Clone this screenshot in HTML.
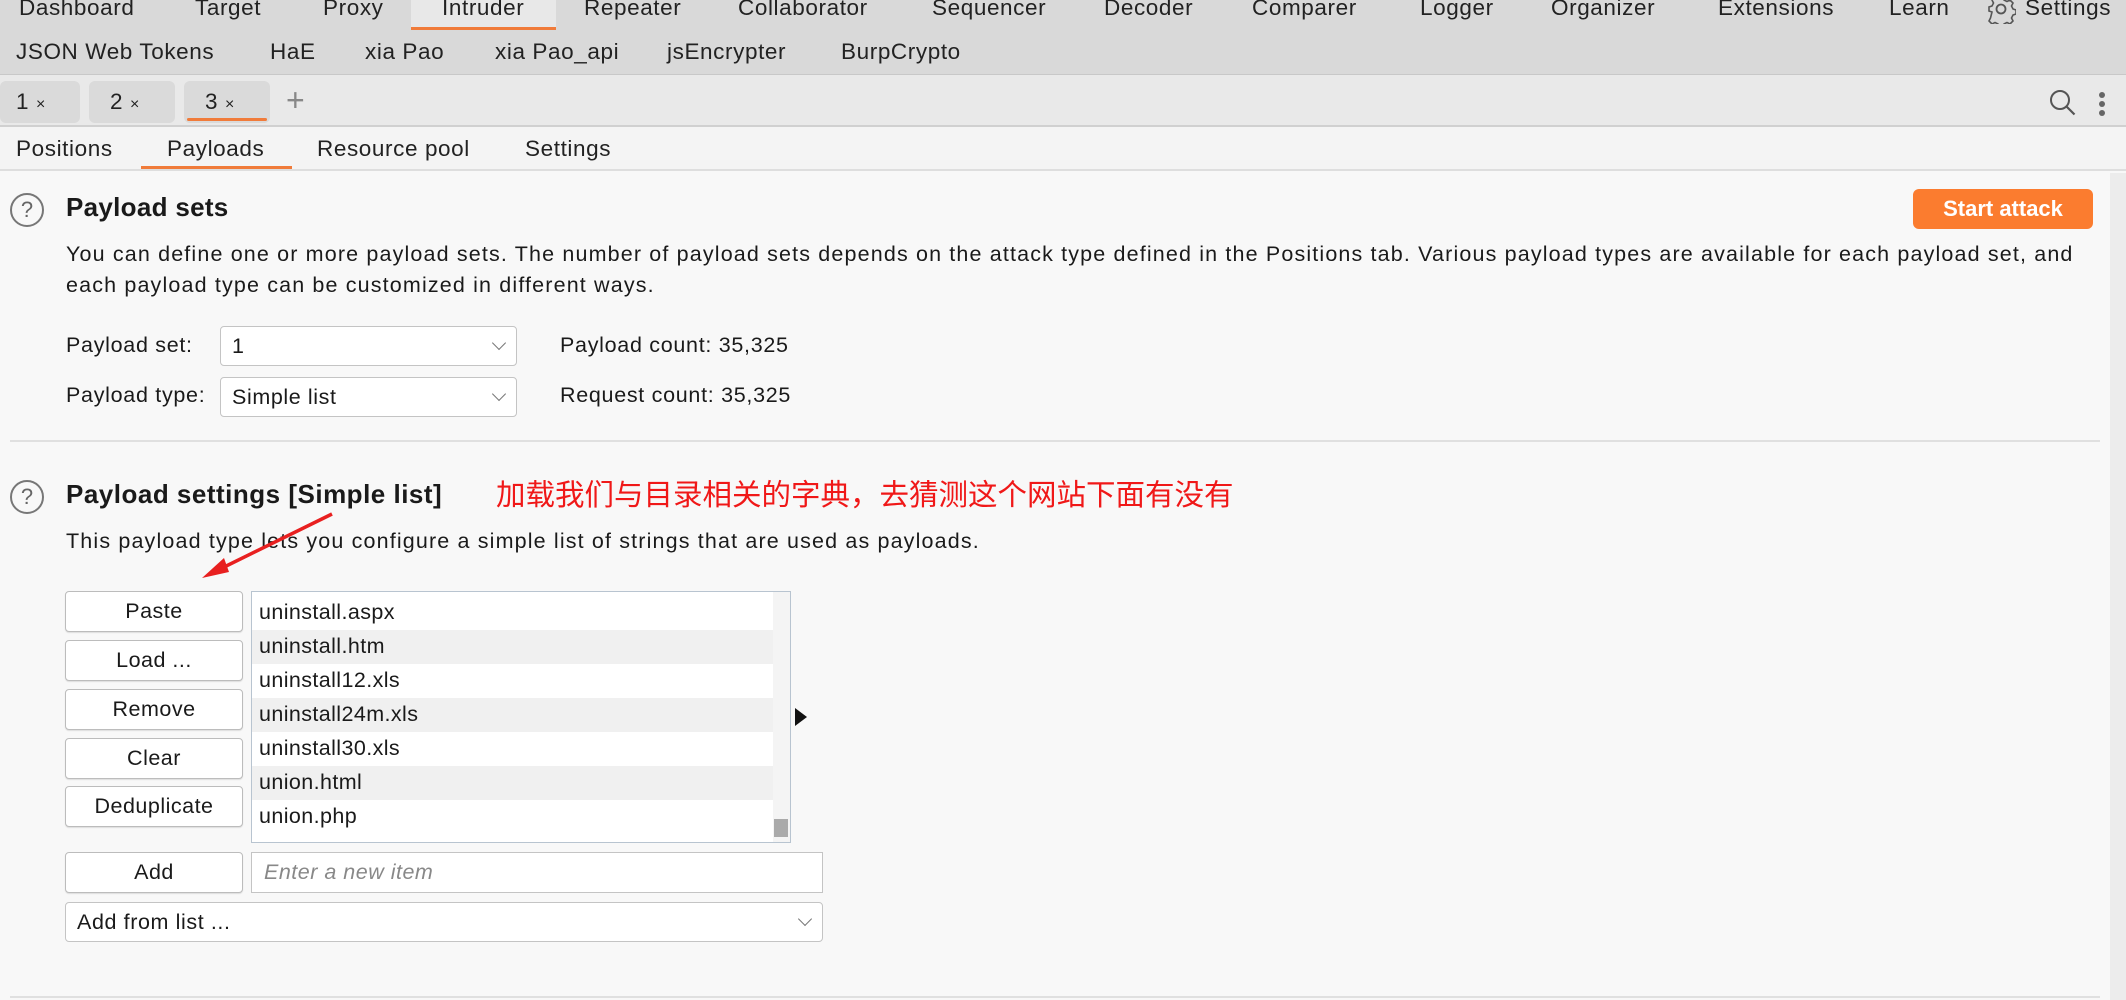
<!DOCTYPE html>
<html><head><meta charset="utf-8"><style>
*{margin:0;padding:0;box-sizing:border-box}
body{width:2126px;height:1000px;overflow:hidden;background:#f8f8f8;font-family:"Liberation Sans","Noto Sans CJK SC",sans-serif;color:#1a1a1a;position:relative}
.a{position:absolute;white-space:nowrap}
.nav{font-size:22.5px;color:#222;letter-spacing:0.6px}
.t{font-size:21.5px;letter-spacing:0.7px}
.d{font-size:21.5px;letter-spacing:1.15px}
.btn{position:absolute;left:65px;width:178px;height:41px;border:1px solid #bcbcbc;border-radius:4px;background:#fff;font-size:21.5px;letter-spacing:0.5px;text-align:center;line-height:39px;box-shadow:0 1px 1px #ddd}
.sel{position:absolute;height:40px;background:#fff;border:1px solid #c4c4c4;border-radius:4px;font-size:21.5px;letter-spacing:0.6px;line-height:38px;padding-left:11px}
.chev{position:absolute;right:12px;top:11px;width:10px;height:10px;border-right:1.5px solid #777;border-bottom:1.5px solid #777;transform:rotate(45deg)}
.help{position:absolute;width:34px;height:34px;border:2.5px solid #777;border-radius:50%;font-size:22px;text-align:center;line-height:29px;color:#666}
.row{height:34px;font-size:21.5px;letter-spacing:0.4px;line-height:32px;padding-left:7px}
</style></head><body>
<div class="a" style="left:0;top:0;width:2126px;height:74px;background:#d9d9d9"></div>
<div class="a" style="left:411px;top:0;width:145px;height:30px;background:#e8e8e8;border-bottom:3px solid #f07b3a"></div>
<div class="a nav" style="left:19px;top:-5px">Dashboard</div>
<div class="a nav" style="left:195px;top:-5px">Target</div>
<div class="a nav" style="left:323px;top:-5px">Proxy</div>
<div class="a nav" style="left:442px;top:-5px">Intruder</div>
<div class="a nav" style="left:584px;top:-5px">Repeater</div>
<div class="a nav" style="left:738px;top:-5px">Collaborator</div>
<div class="a nav" style="left:932px;top:-5px">Sequencer</div>
<div class="a nav" style="left:1104px;top:-5px">Decoder</div>
<div class="a nav" style="left:1252px;top:-5px">Comparer</div>
<div class="a nav" style="left:1420px;top:-5px">Logger</div>
<div class="a nav" style="left:1551px;top:-5px">Organizer</div>
<div class="a nav" style="left:1718px;top:-5px">Extensions</div>
<div class="a nav" style="left:1889px;top:-5px">Learn</div>
<svg class="a" style="left:1986px;top:-6px" width="30" height="30" viewBox="0 0 30 30"><circle cx="15" cy="15" r="4.5" fill="none" stroke="#555" stroke-width="1.8"/><path d="M13 3h4l1 3 3 1.5 3-1.5 3 3-1.5 3 1.5 3 3 1v4l-3 1-1.5 3 1.5 3-3 3-3-1.5-3 1.5-1 3h-4l-1-3-3-1.5-3 1.5-3-3 1.5-3L6 18l-3-1v-4l3-1 1.5-3L6 6l3-3 3 1.5z" fill="none" stroke="#555" stroke-width="1.6"/></svg>
<div class="a nav" style="left:2025px;top:-5px">Settings</div>
<div class="a nav" style="left:16px;top:39px">JSON Web Tokens</div>
<div class="a nav" style="left:270px;top:39px">HaE</div>
<div class="a nav" style="left:365px;top:39px">xia Pao</div>
<div class="a nav" style="left:495px;top:39px">xia Pao_api</div>
<div class="a nav" style="left:667px;top:39px">jsEncrypter</div>
<div class="a nav" style="left:841px;top:39px">BurpCrypto</div>
<div class="a" style="left:0;top:74px;width:2126px;height:53px;background:#e9e9e9;border-top:1px solid #c8c8c8;border-bottom:2px solid #d0d0d0"></div>
<div class="a" style="left:0;top:81px;width:80px;height:42px;background:#dadada;border-radius:6px"></div>
<div class="a" style="left:89px;top:81px;width:86px;height:42px;background:#dadada;border-radius:6px"></div>
<div class="a" style="left:184px;top:81px;width:86px;height:42px;background:#dadada;border-radius:6px"></div>
<div class="a" style="left:187px;top:118px;width:80px;height:3px;background:#f07b3a;border-radius:2px"></div>
<div class="a nav" style="left:16px;top:89px">1 <span style="font-size:16px">×</span></div>
<div class="a nav" style="left:110px;top:89px">2 <span style="font-size:16px">×</span></div>
<div class="a nav" style="left:205px;top:89px">3 <span style="font-size:16px">×</span></div>
<div class="a" style="left:286px;top:82px;font-size:32px;color:#888;font-weight:300">+</div>
<svg class="a" style="left:2048px;top:88px" width="30" height="30"><circle cx="12" cy="12" r="9" fill="none" stroke="#555" stroke-width="2"/><path d="M18.5 18.5l8 8" stroke="#555" stroke-width="2.2"/></svg>
<div class="a" style="left:2099px;top:92px;width:6px;height:6px;border-radius:3px;background:#666;box-shadow:0 9px 0 #666,0 18px 0 #666"></div>
<div class="a" style="left:0;top:127px;width:2126px;height:44px;background:#f4f4f4;border-bottom:2px solid #dedede"></div>
<div class="a nav" style="left:16px;top:136px">Positions</div>
<div class="a nav" style="left:167px;top:136px">Payloads</div>
<div class="a" style="left:141px;top:166px;width:151px;height:3px;background:#f07b3a"></div>
<div class="a nav" style="left:317px;top:136px">Resource pool</div>
<div class="a nav" style="left:525px;top:136px">Settings</div>
<div class="a" style="left:2110px;top:173px;width:16px;height:827px;background:#ececec"></div>

<div class="help" style="left:10px;top:193px">?</div>
<div class="a" style="left:66px;top:192px;font-size:26px;font-weight:bold;letter-spacing:0.3px">Payload sets</div>
<div class="a" style="left:1913px;top:189px;width:180px;height:40px;background:#fb7c2f;border-radius:6px;color:#fff;font-size:22px;font-weight:bold;text-align:center;line-height:40px">Start attack</div>
<div class="a d" style="left:66px;top:242px">You can define one or more payload sets. The number of payload sets depends on the attack type defined in the Positions tab. Various payload types are available for each payload set, and</div>
<div class="a d" style="left:66px;top:273px">each payload type can be customized in different ways.</div>
<div class="a t" style="left:66px;top:333px">Payload set:</div>
<div class="sel" style="left:220px;top:326px;width:297px">1<div class="chev"></div></div>
<div class="a t" style="left:560px;top:333px">Payload count: 35,325</div>
<div class="a t" style="left:66px;top:383px">Payload type:</div>
<div class="sel" style="left:220px;top:377px;width:297px">Simple list<div class="chev"></div></div>
<div class="a t" style="left:560px;top:383px">Request count: 35,325</div>
<div class="a" style="left:10px;top:440px;width:2090px;height:2px;background:#e0e0e0"></div>

<div class="help" style="left:10px;top:480px">?</div>
<div class="a" style="left:66px;top:479px;font-size:26px;font-weight:bold;letter-spacing:0.5px">Payload settings [Simple list]</div>
<div class="a" style="left:496px;top:472px;font-size:29.5px;color:#f01818">加载我们与目录相关的字典，去猜测这个网站下面有没有</div>
<div class="a d" style="left:66px;top:529px">This payload type lets you configure a simple list of strings that are used as payloads.</div>
<svg class="a" style="left:190px;top:505px" width="160" height="90"><path d="M142 9L22 68" stroke="#e82020" stroke-width="3.5"/><path d="M12 73l22-20 5 14z" fill="#e82020"/></svg>

<div class="btn" style="top:591px">Paste</div>
<div class="btn" style="top:640px">Load ...</div>
<div class="btn" style="top:689px">Remove</div>
<div class="btn" style="top:738px">Clear</div>
<div class="btn" style="top:786px">Deduplicate</div>
<div class="a" style="left:251px;top:591px;width:540px;height:252px;background:#fff;border:1px solid #b8c4d0;overflow:hidden">
<div style="height:4px"></div>
<div class="row" style="background:#fff">uninstall.aspx</div>
<div class="row" style="background:#f0f0f0">uninstall.htm</div>
<div class="row" style="background:#fff">uninstall12.xls</div>
<div class="row" style="background:#f0f0f0">uninstall24m.xls</div>
<div class="row" style="background:#fff">uninstall30.xls</div>
<div class="row" style="background:#f0f0f0">union.html</div>
<div class="row" style="background:#fff">union.php</div>
<div class="a" style="right:0;top:0;width:17px;height:252px;background:#f4f4f4"></div>
<div class="a" style="right:2px;top:227px;width:14px;height:18px;background:#aaa"></div>
</div>
<div class="a" style="left:795px;top:708px;width:0;height:0;border-top:9px solid transparent;border-bottom:9px solid transparent;border-left:12px solid #111"></div>
<div class="btn" style="top:852px">Add</div>
<div class="a" style="left:251px;top:852px;width:572px;height:41px;background:#fff;border:1px solid #c4c4c4;font-size:21.5px;letter-spacing:0.5px;font-style:italic;color:#888;line-height:39px;padding-left:12px">Enter a new item</div>
<div class="sel" style="left:65px;top:902px;width:758px">Add from list ...<div class="chev"></div></div>
<div class="a" style="left:10px;top:996px;width:2090px;height:2px;background:#e0e0e0"></div>
</body></html>
